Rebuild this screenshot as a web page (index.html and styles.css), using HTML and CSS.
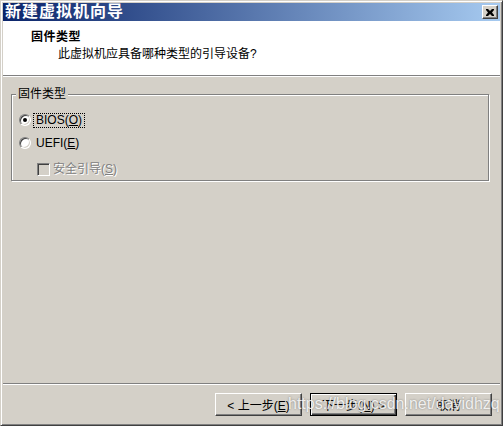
FILE: index.html
```html
<!DOCTYPE html>
<html lang="zh-CN">
<head>
<meta charset="utf-8">
<title>新建虚拟机向导</title>
<link rel="stylesheet" href="styles.css">
</head>
<body>
<div class="window">
  <div class="titlebar">
    <span class="title">新建虚拟机向导</span>
    <span class="close"><svg width="8" height="7" viewBox="0 0 8 7"><path d="M0 0h2l2 2 2-2h2v1l-2 2.5 2 2.5v1h-2l-2-2-2 2h-2v-1l2-2.5-2-2.5z" fill="#000"/></svg></span>
  </div>
  <div class="header">
    <div class="h-title">固件类型</div>
    <div class="h-sub">此虚拟机应具备哪种类型的引导设备?</div>
  </div>
  <div class="sep"></div>
  <div class="content">
    <div class="group">
      <span class="group-title">固件类型</span>
      <div class="opt"><span class="radio checked"></span><span class="focus">BIOS(<u>O</u>)</span></div>
      <div class="opt opt-2"><span class="radio"></span><span class="lbl">UEFI(<u>E</u>)</span></div>
      <div class="opt opt-3 disabled"><span class="check"></span><span class="lbl-dis">安全引导(<u>S</u>)</span></div>
    </div>
  </div>
  <div class="sep"></div>
  <div class="footer">
    <button class="btn">&lt; 上一步(<u>E</u>)</button>
    <button class="btn default">下一步(<u>N</u>) &gt;</button>
    <button class="btn">取消</button>
  </div>
  <div class="watermark">https://blog.csdn.net/davidhzq</div>
</div>
</body>
</html>
```
FILE: styles.css
```css
body {
  margin: 0;
  background: #d4d0c8;
  font-family: "Liberation Sans", "Noto Sans CJK SC", sans-serif;
  font-size: 12px;
  color: #000;
}

.window {
  position: relative;
  box-sizing: border-box;
  width: 503px;
  height: 426px;
  border: 1px solid;
  border-color: #d4d0c8 #404040 #404040 #d4d0c8;
  box-shadow: inset 1px 1px #fff, inset -1px -1px #808080;
  padding: 2px;
  display: flex;
  flex-direction: column;
  background: #d4d0c8;
}

.titlebar {
  height: 18px;
  flex: none;
  display: flex;
  align-items: center;
  justify-content: space-between;
  padding: 0 2px;
  background: linear-gradient(to right, #0a246a, #a6caf0);
}

.title {
  color: #fff;
  font-weight: bold;
  font-size: 16px;
  line-height: 18px;
  letter-spacing: 1px;
}

.close {
  box-sizing: border-box;
  width: 16px;
  height: 14px;
  display: flex;
  align-items: center;
  justify-content: center;
  background: #d4d0c8;
  border: 1px solid;
  border-color: #fff #404040 #404040 #fff;
  box-shadow: inset -1px -1px #808080;
}

.header {
  flex: none;
  box-sizing: border-box;
  height: 54px;
  background: #fff;
  padding: 9px 0 0 28px;
}

.h-title {
  font-weight: bold;
  line-height: 14px;
  letter-spacing: 0.5px;
}

.h-sub {
  margin: 3px 0 0 27px;
  line-height: 14px;
}

.sep {
  flex: none;
  height: 0;
  border-top: 1px solid #808080;
  border-bottom: 1px solid #fff;
}

.content {
  flex: 1;
  padding-top: 17px;
}

.group {
  position: relative;
  box-sizing: border-box;
  height: 87px;
  margin: 0 11px 0 8px;
  border: 1px solid #808080;
  box-shadow: inset 1px 1px #fff, 1px 1px #fff;
  padding: 17px 0 0 7px;
}

.group-title {
  position: absolute;
  top: -8px;
  left: 4px;
  padding: 0 2px;
  line-height: 14px;
  background: #d4d0c8;
}

.opt {
  display: flex;
  align-items: center;
  height: 16px;
}

.opt-2 {
  margin-top: 7px;
}

.opt-3 {
  margin-top: 10px;
  padding-left: 18px;
}

.radio {
  position: relative;
  box-sizing: border-box;
  width: 12px;
  height: 12px;
  border-radius: 50%;
  background: #fff;
  border: 1px solid;
  border-color: #808080 #fff #fff #808080;
  box-shadow: inset 1px 1px #404040, inset -1px -1px #d4d0c8;
}

.radio.checked::after {
  content: "";
  position: absolute;
  left: 3px;
  top: 3px;
  width: 4px;
  height: 4px;
  border-radius: 50%;
  background: #000;
}

.focus {
  margin-left: 2px;
  padding: 0 2px;
  border: 1px dotted #000;
  line-height: 13px;
}

.lbl {
  margin-left: 2px;
  padding: 0 3px;
  line-height: 13px;
}

.check {
  box-sizing: border-box;
  width: 13px;
  height: 13px;
  border: 1px solid;
  border-color: #808080 #fff #fff #808080;
  box-shadow: inset 1px 1px #404040, inset -1px -1px #d4d0c8;
  background: #d4d0c8;
}

.lbl-dis {
  margin-left: 3px;
  color: #808080;
  text-shadow: 1px 1px #fff;
  line-height: 13px;
}

.footer {
  flex: none;
  box-sizing: border-box;
  height: 38px;
  display: flex;
  justify-content: flex-end;
  align-items: flex-start;
  gap: 8px;
  padding: 8px 8px 0 0;
}

.btn {
  box-sizing: border-box;
  width: 87px;
  height: 23px;
  padding: 0;
  font-family: "Liberation Sans", "Noto Sans CJK SC", sans-serif;
  font-size: 12px;
  color: #000;
  background: #d4d0c8;
  border: 1px solid;
  border-color: #fff #404040 #404040 #fff;
  box-shadow: inset -1px -1px #808080;
}

.btn.default {
  border: 1px solid #000;
  box-shadow: inset 1px 1px #fff, inset -1px -1px #404040, inset -2px -2px #808080;
}

.watermark {
  position: absolute;
  left: 287px;
  top: 393px;
  font-family: "Liberation Sans", sans-serif;
  font-size: 16px;
  line-height: 20px;
  color: rgba(255, 255, 255, 0.85);
  text-shadow: 0 0 2px rgba(90, 90, 90, 0.7);
  pointer-events: none;
  white-space: nowrap;
}
```
